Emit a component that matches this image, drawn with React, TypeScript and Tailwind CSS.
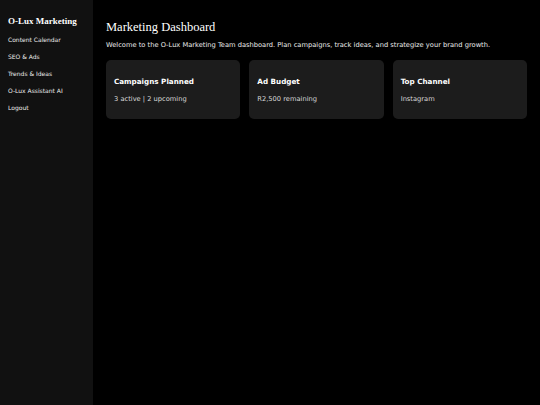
export default function App() {
  const nav = ["Content Calendar", "SEO & Ads", "Trends & Ideas", "O-Lux Assistant AI", "Logout"];
  const cards = [
    { t: "Campaigns Planned", s: "3 active | 2 upcoming" },
    { t: "Ad Budget", s: "R2,500 remaining" },
    { t: "Top Channel", s: "Instagram" },
  ];
  const sans = { fontFamily: '"DejaVu Sans", sans-serif' };
  return (
    <div className="flex w-[540px] h-[405px] bg-black text-white" style={sans}>
      <aside className="w-[93px] shrink-0 bg-[#111111] px-[8px] pt-[15px]">
        <div className="text-[9px] font-bold leading-[12px] mb-[4px] whitespace-nowrap" style={{ fontFamily: '"Liberation Serif", serif' }}>
          O-Lux Marketing
        </div>
        <ul className="flex flex-col">
          {nav.map((n) => (
            <li key={n} className="text-[6px] leading-[17px] text-[#ececec] whitespace-nowrap">{n}</li>
          ))}
        </ul>
      </aside>
      <main className="flex-1 px-[13px] pt-[18px]">
        <h1 className="text-[12.5px] leading-[18px] mb-[4px]" style={{ fontFamily: '"Liberation Serif", serif' }}>
          Marketing Dashboard
        </h1>
        <p className="text-[6.7px] leading-[10px] text-[#ececec] mb-[10px] whitespace-nowrap">
          Welcome to the O-Lux Marketing Team dashboard. Plan campaigns, track ideas, and strategize your brand growth.
        </p>
        <div className="grid grid-cols-3 gap-[9px]">
          {cards.map((c) => (
            <div key={c.t} className="h-[59px] rounded-[5px] bg-[#1c1c1c] px-[8px] pt-[17px]">
              <div className="text-[7.2px] font-bold leading-[10px] mb-[7px]">{c.t}</div>
              <div className="text-[6.7px] leading-[10px] text-[#d9d9d9]">{c.s}</div>
            </div>
          ))}
        </div>
      </main>
    </div>
  );
}
